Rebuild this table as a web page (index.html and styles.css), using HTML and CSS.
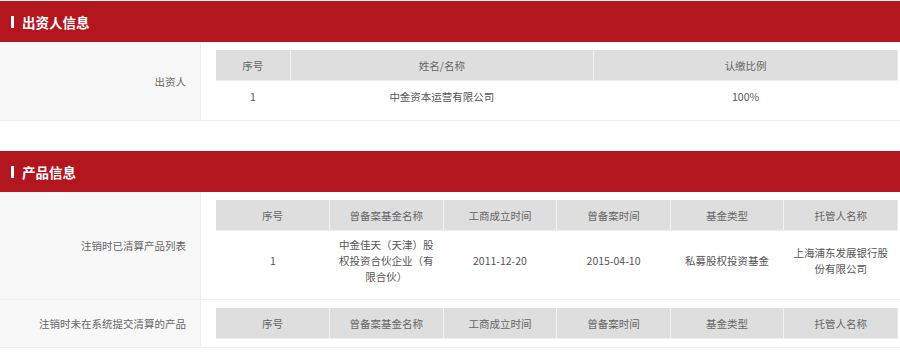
FILE: index.html
```html
<!DOCTYPE html>
<html lang="zh-CN">
<head>
<meta charset="utf-8">
<title>出资人信息</title>
<link rel="stylesheet" href="styles.css">
</head>
<body>
  <section class="block">
    <h2 class="block-title">出资人信息</h2>
    <div class="info-row">
      <div class="info-label">出资人</div>
      <div class="info-value">
        <table class="grid grid-investor">
          <colgroup>
            <col class="col-index">
            <col>
            <col>
          </colgroup>
          <thead>
            <tr><th>序号</th><th>姓名/名称</th><th>认缴比例</th></tr>
          </thead>
          <tbody>
            <tr><td>1</td><td>中金资本运营有限公司</td><td>100%</td></tr>
          </tbody>
        </table>
      </div>
    </div>
  </section>

  <section class="block block-spaced">
    <h2 class="block-title">产品信息</h2>
    <div class="info-row">
      <div class="info-label">注销时已清算产品列表</div>
      <div class="info-value">
        <table class="grid">
          <thead>
            <tr><th>序号</th><th>曾备案基金名称</th><th>工商成立时间</th><th>曾备案时间</th><th>基金类型</th><th>托管人名称</th></tr>
          </thead>
          <tbody>
            <tr class="tall"><td>1</td><td>中金佳天（天津）股权投资合伙企业（有限合伙）</td><td>2011-12-20</td><td>2015-04-10</td><td>私募股权投资基金</td><td>上海浦东发展银行股份有限公司</td></tr>
          </tbody>
        </table>
      </div>
    </div>
    <div class="info-row">
      <div class="info-label">注销时未在系统提交清算的产品</div>
      <div class="info-value">
        <table class="grid">
          <thead>
            <tr><th>序号</th><th>曾备案基金名称</th><th>工商成立时间</th><th>曾备案时间</th><th>基金类型</th><th>托管人名称</th></tr>
          </thead>
        </table>
      </div>
    </div>
  </section>
</body>
</html>
```

FILE: styles.css
```css
html, body {
  margin: 0;
  padding: 0;
  background: #fff;
}

body {
  padding-top: 1px;
  font-family: "Noto Sans CJK SC", "Noto Sans", sans-serif;
  font-size: 10.5px;
  color: #555;
}

.block-spaced {
  margin-top: 30px;
}

.block-title {
  display: flex;
  align-items: center;
  height: 41px;
  margin: 0;
  padding-left: 11px;
  background: #b3161f;
  color: #fff;
  font-size: 13.5px;
  font-weight: bold;
}

.block-title::before {
  content: "";
  width: 3px;
  height: 12px;
  margin-right: 8px;
  background: #fff;
}

.info-row {
  display: grid;
  grid-template-columns: 201px 1fr;
  border-bottom: 1px solid #eee;
}

.info-label {
  display: flex;
  align-items: center;
  justify-content: flex-end;
  padding-right: 14px;
  background: #f8f8f8;
  border-right: 1px solid #eee;
  color: #666;
}

.info-value {
  padding: 8px 2px 8px 15px;
}

.grid {
  width: 100%;
  table-layout: fixed;
  border-collapse: collapse;
}

.grid-investor .col-index {
  width: 74px;
}

.grid th {
  height: 30px;
  padding: 0;
  background: #dedede;
  border-right: 1px solid #f2f2f2;
  border-bottom: 1px solid #eee;
  color: #666;
  font-weight: normal;
}

.grid th:last-child {
  border-right-color: #e8e8e8;
}

.grid td {
  height: 31px;
  padding: 0 8px;
  text-align: center;
  line-height: 16px;
  color: #555;
}

.grid .tall td {
  height: 60px;
}
```
